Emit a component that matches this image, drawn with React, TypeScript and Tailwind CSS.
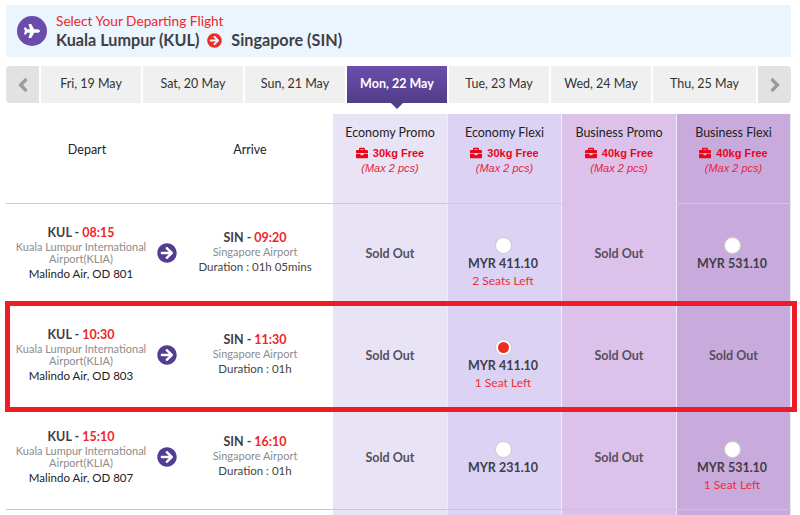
import { FaArrowCircleRight, FaBriefcase, FaPlane, FaAngleLeft, FaAngleRight } from "react-icons/fa";

const dates = [
  { label: "Fri, 19 May", w: "w-[100px]" },
  { label: "Sat, 20 May", w: "w-[100px]" },
  { label: "Sun, 21 May", w: "w-[100px]" },
  { label: "Mon, 22 May", w: "w-[100px]", active: true },
  { label: "Tue, 23 May", w: "w-[100px]" },
  { label: "Wed, 24 May", w: "w-[100px]" },
  { label: "Thu, 25 May", w: "w-[103px]" },
];

const columns = [
  { name: "Economy Promo", bag: "30kg Free", bg: "bg-[#e9e3f6]", w: "w-[115px]" },
  { name: "Economy Flexi", bag: "30kg Free", bg: "bg-[#dcd2f4]", w: "w-[114px]" },
  { name: "Business Promo", bag: "40kg Free", bg: "bg-[#dcc2ea]", w: "w-[115px]" },
  { name: "Business Flexi", bag: "40kg Free", bg: "bg-[#c8abdc]", w: "w-[114px]" },
];

type Fare = { price?: string; seats?: string; selected?: boolean };

const flights: {
  dep: string;
  arr: string;
  no: string;
  duration: string;
  fares: Fare[];
}[] = [
  {
    dep: "08:15",
    arr: "09:20",
    no: "OD 801",
    duration: "Duration : 01h 05mins",
    fares: [{}, { price: "MYR 411.10", seats: "2 Seats Left" }, {}, { price: "MYR 531.10" }],
  },
  {
    dep: "10:30",
    arr: "11:30",
    no: "OD 803",
    duration: "Duration : 01h",
    fares: [{}, { price: "MYR 411.10", seats: "1 Seat Left", selected: true }, {}, {}],
  },
  {
    dep: "15:10",
    arr: "16:10",
    no: "OD 807",
    duration: "Duration : 01h",
    fares: [{}, { price: "MYR 231.10" }, {}, { price: "MYR 531.10", seats: "1 Seat Left" }],
  },
];

function FareCell({ fare }: { fare: Fare }) {
  if (!fare.price) {
    return <p className="pt-[41px] text-center text-[12.5px] font-bold text-[#55505c]">Sold Out</p>;
  }
  return (
    <div className="flex flex-col items-center pt-[33px] pr-[3px]">
      <span className="flex h-[17px] w-[17px] items-center justify-center rounded-full border border-[#c9c9c9] bg-white">
        {fare.selected && <span className="h-[11px] w-[11px] rounded-full bg-[#ee2e24]" />}
      </span>
      <p className="mt-[1px] text-[12.5px] leading-[17px] font-bold text-[#403e48]">{fare.price}</p>
      {fare.seats && <p className="text-xs leading-[18px] text-[#ee2e34]">{fare.seats}</p>}
    </div>
  );
}

export default function App() {
  return (
    <div className="relative h-[515px] w-[800px] overflow-hidden bg-white pt-[5px] pl-[6px] font-['Lato',sans-serif] text-[#333]">
      <div className="flex h-[52px] w-[785px] items-center bg-[#eaf5fd] pl-[11px]">
        <span className="flex h-[30px] w-[30px] items-center justify-center rounded-full bg-[#6a4cab] text-white">
          <FaPlane size={16} />
        </span>
        <div className="ml-[9px]">
          <p className="text-[13.7px] leading-[18px] text-[#f1262a]">Select Your Departing Flight</p>
          <div className="flex items-center text-[16.2px] leading-[20px] font-bold text-[#403f45]">
            <span>Kuala Lumpur (KUL)</span>
            <FaArrowCircleRight className="mr-[9px] ml-[8px] text-[#ee2e24]" size={15} />
            <span>Singapore (SIN)</span>
          </div>
        </div>
      </div>

      <div className="mt-[9px] flex h-[37px] w-[785px] gap-[2px]">
        <div className="flex w-[33px] items-center justify-center rounded-l bg-[#e2e2e2] text-[#9a9a9a]">
          <FaAngleLeft size={22} />
        </div>
        {dates.map((d) => (
          <div
            key={d.label}
            className={
              d.active
                ? `relative flex ${d.w} items-center justify-center bg-gradient-to-b from-[#6b4fac] to-[#523d88] text-[12.5px] font-bold text-white`
                : `flex ${d.w} items-center justify-center bg-[#f0f0f0] text-[12.5px] text-[#333]`
            }
          >
            {d.label}
            {d.active && (
              <span className="absolute top-full left-1/2 -ml-[6px] border-x-[6px] border-t-[6px] border-x-transparent border-t-[#523d88]" />
            )}
          </div>
        ))}
        <div className="flex w-[33px] items-center justify-center rounded-r bg-[#e2e2e2] text-[#9a9a9a]">
          <FaAngleRight size={22} />
        </div>
      </div>

      <div className="mt-[11px] flex h-[90px] w-[785px] border-b border-[#cfcbd6]">
        <div className="flex w-[327px] items-center pb-[16px] text-[12.5px] text-[#222]">
          <span className="w-[162px] text-center">Depart</span>
          <span className="w-[164px] text-center">Arrive</span>
        </div>
        {columns.map((c) => (
          <div key={c.name} className={`${c.w} ${c.bg} border-r border-[#efeaf8] pt-[11px] text-center`}>
            <p className="text-[12.5px] leading-[16px] text-[#222]">{c.name}</p>
            <p className="mt-[5px] flex items-center justify-center gap-[5px] font-['Liberation_Sans',sans-serif] text-[11px] leading-[14px] font-bold text-[#e8071a]">
              <FaBriefcase size={12} />
              {c.bag}
            </p>
            <p className="mt-[1px] font-['Liberation_Sans',sans-serif] text-[11px] leading-[15px] text-[#e8243c] italic">
              (Max 2 pcs)
            </p>
          </div>
        ))}
      </div>

      {flights.map((f) => (
        <div key={f.no} className="flex h-[102px] w-[785px] border-b border-[#c9c5d0]">
          <div className="flex w-[327px] items-start">
            <div className="w-[150px] pt-[20px] text-center">
              <p className="text-[12.5px] leading-[17px] font-bold text-[#403e48]">
                KUL - <span className="text-[#f1262a]">{f.dep}</span>
              </p>
              <p className="text-[11px] leading-[12px] text-[#8c8c8c]">Kuala Lumpur International</p>
              <p className="text-[11px] leading-[12px] text-[#8c8c8c]">Airport(KLIA)</p>
              <p className="mt-[1px] text-[11.5px] leading-[16px] text-[#222]">Malindo Air, {f.no}</p>
            </div>
            <FaArrowCircleRight className="mt-[39px] ml-[1px] text-[#523d94]" size={20} />
            <div className="w-[156px] pt-[26px] text-center">
              <p className="text-[12.5px] leading-[16px] font-bold text-[#403e48]">
                SIN - <span className="text-[#f1262a]">{f.arr}</span>
              </p>
              <p className="text-[11px] leading-[12px] text-[#8c8c8c]">Singapore Airport</p>
              <p className="mt-[1px] text-[11.5px] leading-[16px] text-[#444]">{f.duration}</p>
            </div>
          </div>
          {f.fares.map((fare, i) => (
            <div key={i} className={`${columns[i].w} ${columns[i].bg} border-r border-[#efeaf8]`}>
              <FareCell fare={fare} />
            </div>
          ))}
        </div>
      ))}

      <div className="flex h-[10px] w-[785px]">
        <div className="w-[327px]" />
        {columns.map((c) => (
          <div key={c.name} className={`${c.w} ${c.bg} border-r border-[#efeaf8]`} />
        ))}
      </div>

      <div className="absolute top-[301px] left-[5px] h-[111px] w-[792px] border-[5px] border-[#ee1c25]" />
    </div>
  );
}
